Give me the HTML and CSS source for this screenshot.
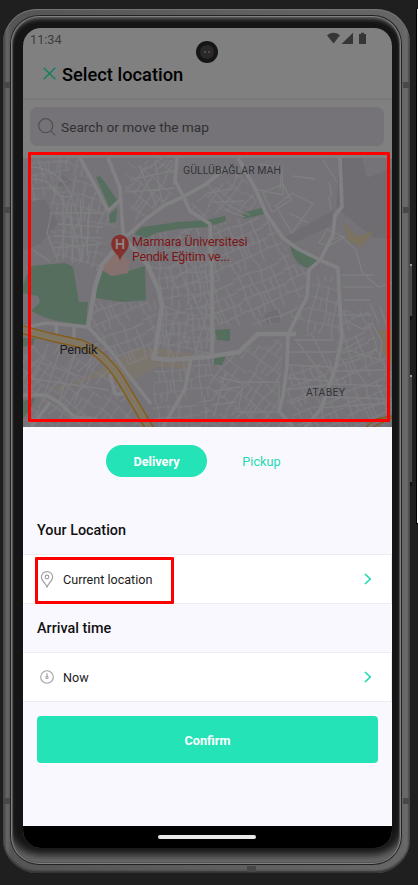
FILE: index.html
```html
<!DOCTYPE html>
<html lang="en">
<head>
<meta charset="utf-8">
<title>Select location</title>
<link rel="stylesheet" href="styles.css">
</head>
<body>
<div class="window-edge"></div>
<i class="side-key power"></i><i class="side-key volume"></i>
<div class="phone">
  <i class="antenna a1"></i><i class="antenna a2"></i><i class="antenna a3"></i><i class="antenna a4"></i><i class="antenna a5"></i><i class="antenna a6"></i><i class="antenna bottom"></i>
  <div class="bezel">
    <main class="screen">
      <div class="status">
        <span>11:34</span>
        <svg width="40" height="13" viewBox="0 0 40 13" fill="#363636"><path d="M0 3.2Q6.500-1.600 13 3.200L6.500 11.500Z"/><path d="M14.500 12 26 .8V12Z"/><path d="M32 2h2V.7h3V2h2v10h-7Z"/></svg>
      </div>
      <div class="camera"><i></i></div>
      <header class="header">
        <svg width="13" height="13" viewBox="0 0 13 13" fill="none" stroke="#14805f" stroke-width="1.500"><path d="M.7.700 12.300 12.300M12.300.700.700 12.300"/></svg>
        <h1>Select location</h1>
      </header>
      <div class="search-wrap">
        <div class="search">
          <svg width="18" height="18" viewBox="0 0 18 18" fill="none" stroke="#505054" stroke-width="1.200"><circle cx="7.700" cy="7.700" r="7"/><path d="m12.800 12.800 4.500 4.500"/></svg>
          <span>Search or move the map</span>
        </div>
      </div>
      <div class="map">
        <svg width="369" height="269" viewBox="23 158 369 269">
          <defs>
            <g id="blocks" fill="none" stroke="#7f7e81" stroke-width="1.200">
              <path d="M0 5H18L31 8H52M0 17H12L28 19H52M0 29H20L36 31H52M0 42H31L52 41M7 0V17L5 29V52M18 5V19L20 29V42L17 52M31 0V8L28 19V42L30 52M42 8V31L39 42V52M12 42V52M36 19V31M24 29V42M47 31V42M13 17V29"/>
            </g>
            <pattern id="p1" width="52" height="52" patternUnits="userSpaceOnUse" patternTransform="rotate(12)"><use href="#blocks"/></pattern>
            <pattern id="p2" width="52" height="52" patternUnits="userSpaceOnUse" patternTransform="rotate(-24) scale(.95)"><use href="#blocks"/></pattern>
            <pattern id="p3" width="52" height="52" patternUnits="userSpaceOnUse" patternTransform="rotate(35) scale(1)"><use href="#blocks"/></pattern>
            <pattern id="p4" width="52" height="52" patternUnits="userSpaceOnUse" patternTransform="rotate(-8) scale(.9)"><use href="#blocks"/></pattern>
          </defs>
          <path fill="#757378" d="M23 158h369v269H23z"/>
          <path fill="#6f6d72" d="M340 158h22l5 20 25-10v71l-20-2-36-30zM285 237l49-27-2 15-40 19zM23 200l23 0 12 24-18 20-17 6zM53 184l10-9 9 7-8 6zM264 313l14-3 5 12-16 2z"/>
          <path fill="#7b7260" d="m343 222 14 15 18-7-14 17-13-6zM379 330h13v35l-9-12z"/>
          <path fill="#7c756e" d="m52 389 40-14 42-27 27 1 33 5-5 15-33-2-28 16-30-6-43 14z"/>
          <path fill="url(#p1)" d="M56 159h23l29 52 8 15-17 45-24-9H58l-10-35zM167 300h48v58h-60zM306 276h35v65l-52-8z"/>
          <path fill="url(#p2)" d="m183 226 60-8 22-4 30 50 13 6-14 48-38 10-45-4-47-48zM94 302h64l-4 54-45 16-22-32zM338 310h30l10 40 14 18v59H285l4-60 47-9z"/>
          <path fill="url(#p3)" d="M128 160h46l2 33-40 31-13-36zM188 205l54-34 18 36-40 12-22 1zM23 342l62 5 27 25 36 55H23zM213 358l70-20-4 72 10 17h-85z"/>
          <path fill="url(#p4)" d="M131 232l45-2 43 46-6 78-50 4-4-70zM32 159h40l-5 26-35 18zM154 359h58l-4 68h-55z"/>
          <g fill="#566e5e">
            <path d="m96 177 4-1 4 5 13 19-7 9zM109 215l8-7-1 14-6 1zM134 234l8-7 36-5 29-2 18-4 1 5-19 6-29 2-22 4-10 5zM243 213l19-5 2 6-21 5zM290 246l28 14-10 8q-14-3-18-22z"/>
            <path d="m31 266 34-3 8 4 2 12 4 23 9 0-2 23-28-4-12-3-15-7 9-9-2-6-15-3v-8zM101 270l11 6 33-10 1 34-24 2-26-4V284z"/>
            <path d="m215 330 15-1v12l-13-1zM214 356h12l-4 9h-8zM23 338h12l-2 7-10 2zM23 401l12-3-5 12-7 8z"/>
          </g>
          <path fill="#86716f" d="m118 250 12 12-2 11-16 3-11-7z"/>
          <g fill="none" stroke="#7f7f81" stroke-width="1.300">
            <path d="M30 180q20-4 33 22t18 60M30 167q32 0 44 37t7 58M37 158q10 28 19 35t20 1M56 213h46M57 224l46 3M54 236l48 2M53 248l48-4M63 195v66M71 203l2 60M80 198l3 60M89 204l-2 52M33 250l17 12M52 211l-5 22 11 29M130 180l45-10M127 192l48-4M139 165l18 42M155 161l7 42M145 170l17-12M263 193l20-9 8 16-19 12zM276 206l16-13 21 11-21 29zM289 213l20 10M319 243l8-14 17 8-15 9zM331 240l10-4 15 14 6 22 16 15 14-4M370 303l9 21M260 164l22 4 1 27-28-6M207 193l25-4 7-20M213 202l31-1M218 208l27 9M208 184q14 22 42 31M342 275h31M343 287h29M344 300h26M342 315h30M347 321l15 8 10-6 10 19-2 18-33-10M340 352l24-14M343 360l34-10M335 371l50-1M330 384l53 2M325 397l66 2M318 408l72-5M294 340h40M289 352h47M288 365l45 2M286 378l43 3M286 390l39-5M289 404l33-13M296 340l34 45M311 333l24 47M243 382h36v30h-41zM219 377l23 6M214 391l26-4M212 405l25-3M226 371l-12 45M46 354l-19 30M63 342l-18 51M77 348l-18 54M92 358l-18 46M34 361l49 16M27 378l82 12"/>
            <path d="M281 174l-1 16M293 176l22 3M323 160l14 22M329 196l2 14M329 182l3 15M380 306l6 18"/>
          </g>
          <g fill="none" stroke="#818183" stroke-width="3.600" stroke-linejoin="round">
            <path d="m80 158 17 31 11 22 12-11M108 158l12 30 3 44 5 11M127 236l20-18 18-13 18-8 23-13 21-17" />
            <path stroke-width="4.600" d="m124 236-11 16-11 13-7 22-7 40M125 239l10 11 12 14 12 27 3 15-7 47-2 5 16 2 38-3 32-5 19-18h38"/>
            <path d="m177 158-2 23 8 15 7 15 20 13 2 60v69M238 158l17 30 11 25 17 25 15 11 22 11 18 8 1 22 3 47-6 29-15 43-24 28"/>
            <path d="m340 158 2 49-7 8-2 20-13 25-11 10-2 27-8 15-11 23-1 31-4 30-4 15 14 16M191 358l-6 31-22 38M23 328l23-5 42 4 23 24 16 22 24 31M56 322l1 18M23 395h23l14 8 14 14 23 2M50 402l-19 25M110 374l5 20h12M74 325v17"/>
          </g>
          <path fill="none" stroke="#855c18" stroke-width="9" d="m20 329 30 8 32 7q24 11 40 38l28 47"/>
          <path fill="none" stroke="#807664" stroke-width="6.200" d="m20 329 30 8 32 7q24 11 40 38l28 47"/>
          <path fill="none" stroke="#855c18" stroke-width="1.300" d="m366 427 10-8 16-3M373 427l19-9"/>
          <path fill="#84312e" d="M120 261c-1-7-8.800-9-8.800-17.500a8.800 8.800 0 0 1 17.600 0C128.800 252 121 254 120 261Z"/>
          <path fill="none" stroke="#8d8585" stroke-width="2" d="M116.800 239v10M123.200 239v10M117 244h6"/>
          <g class="map-text">
            <text x="183" y="174" textLength="98">GÜLLÜBAĞLAR MAH</text>
            <text x="306" y="396" textLength="39">ATABEY</text>
            <text class="town" x="59.500" y="354" textLength="38">Pendik</text>
            <text class="place" x="132" y="246" textLength="115.500">Marmara Üniversitesi</text>
            <text class="place" x="132" y="260.500" textLength="98">Pendik Eğitim ve...</text>
          </g>
        </svg>
      </div>
      <section class="sheet">
        <nav class="tabs"><button class="tab active">Delivery</button><button class="tab">Pickup</button></nav>
        <h2>Your Location</h2>
        <div class="row">
          <svg width="14" height="17" viewBox="0 0 14 17" fill="none" stroke="#a09fa4" stroke-width="1.200"><path d="M7 16C5.500 12.500 1.400 9.500 1.400 6a5.600 5.400 0 0 1 11.200 0C12.600 9.500 8.500 12.500 7 16Z"/><circle cx="7" cy="6" r="1.800"/></svg>
          <span>Current location</span>
          <svg class="chevron" width="8" height="12" viewBox="0 0 8 12"><path d="m1 1 5.200 5L1 11"/></svg>
        </div>
        <h2>Arrival time</h2>
        <div class="row">
          <svg width="14" height="14" viewBox="0 0 14 14" fill="none" stroke="#a09fa4" stroke-width="1.100"><circle cx="7" cy="7" r="6.300"/><path d="M7 3.200v3.200"/><circle cx="7" cy="7.400" r="1.100"/></svg>
          <span>Now</span>
          <svg class="chevron" width="8" height="12" viewBox="0 0 8 12"><path d="m1 1 5.200 5L1 11"/></svg>
        </div>
        <button class="confirm">Confirm</button>
      </section>
      <div class="navbar"><i></i></div>
      <div class="mark mark-map"></div>
      <div class="mark mark-location"></div>
    </main>
  </div>
</div>
</body>
</html>
```
FILE: styles.css
```css
* { box-sizing: border-box; }
body {
  margin: 0;
  width: 418px;
  height: 885px;
  padding: 9px 8px 12px 3px;
  overflow: hidden;
  position: relative;
  background: #1f1f1f;
  font-family: Roboto, sans-serif;
}
h1, h2 { margin: 0; font-weight: 500; }
svg { display: block; flex: none; }
button { border: 0; padding: 0; background: none; font: inherit; }
.window-edge {
  position: absolute;
  right: 0;
  top: 9px;
  width: 2px;
  height: 515px;
  background: #fff;
  border: solid #000;
  border-width: 0 0 1px 1px;
}
.side-key {
  position: absolute;
  left: 408px;
  width: 4px;
  background: #4b4b4b;
  border-top: 2px solid #999;
  border-bottom: 4px solid #111;
}
.power { top: 264px; height: 56px; }
.volume { top: 375px; height: 111px; }
.phone {
  position: relative;
  width: 407px;
  height: 864px;
  padding: 6px 8px 8px 7px;
  border-radius: 34px;
  background: linear-gradient(90deg, #444, #666 4px, #555 8px, #666 399px, #6a6a6a 404px, #444);
  box-shadow: inset 0 1px 1px #777, inset 0 -2px 2px #333;
}
.bezel {
  height: 850px;
  padding: 13px 10px 18px 13px;
  border-radius: 29px;
  background: #151515;
  box-shadow: inset 0 0 0 1px #222, inset 0 0 0 2px #808080, inset 0 0 1px 3px #555, inset 0 4px 4px #626262, inset 0 -13px 9px -3px #6c6c6c;
}
.antenna { position: absolute; width: 6px; height: 6px; left: 1px; background: #484848; }
.a1, .a2 { top: 73px; }
.a3, .a4 { top: 198px; }
.a5, .a6 { top: 789px; }
.a2, .a4, .a6 { left: 400px; }
.antenna.bottom { left: 244px; bottom: 1px; width: 9px; }
.screen {
  position: relative;
  width: 369px;
  height: 820px;
  display: flex;
  flex-direction: column;
  overflow: hidden;
  border-radius: 18px;
  background: #808080;
}
.status {
  height: 22px;
  padding: 4px 25px 0 7px;
  display: flex;
  justify-content: space-between;
  font-size: 12.7px;
  line-height: 15px;
  color: #3c3c3c;
}
.camera {
  position: absolute;
  left: 173px;
  top: 13px;
  width: 22px;
  height: 22px;
  border-radius: 50%;
  background: #151515;
  display: grid;
  place-items: center;
}
.camera i {
  width: 14px;
  height: 14px;
  border-radius: 50%;
  background: radial-gradient(circle at 5px 7px, #77704a 0, transparent 1.5px), radial-gradient(circle at 9px 7px, #885544 0, transparent 1.5px), #292929;
}
.header {
  height: 50px;
  padding: 0 20px 2px;
  display: flex;
  align-items: center;
  gap: 6px;
  border-bottom: 2px solid #797979;
}
.header h1 { padding-top: 2px; font-size: 18.3px; color: #000; }
.search-wrap { height: 58px; padding: 7px 8px 12px 7px; }
.search {
  height: 39px;
  padding: 0 8px;
  display: flex;
  align-items: center;
  gap: 5px;
  border-radius: 7px;
  background: #757377;
  color: #303032;
  font-size: 13.7px;
}
.map { height: 269px; }
.map-text { fill: #343438; font-size: 10.500px; }
.map-text .town { fill: #1b1b1d; font-size: 13px; }
.map-text .place { fill: #7c1515; font-size: 12.500px; }
.sheet { height: 399px; background: #faf8ff; }
.tabs {
  height: 79px;
  padding: 18px 0 0 83px;
  display: flex;
  align-items: flex-start;
  gap: 4px;
}
.tab { width: 101px; height: 32px; padding-top: 1px; font-size: 12.7px; color: #25d9af; }
.tab.active { border-radius: 16px; background: #24e3b7; color: #fff; font-weight: 700; }
.sheet h2 { height: 48px; padding: 0 14px; font-size: 14.4px; line-height: 50px; color: #111; }
.row {
  height: 50px;
  padding: 0 19px 0 17px;
  display: flex;
  align-items: center;
  gap: 9px;
  border: 1px solid #eeecf2;
  border-left: 0;
  background: #fff;
  font-size: 12.6px;
  color: #1c1c1c;
}
.chevron { margin-left: auto; fill: none; stroke: #25d9af; stroke-width: 1.700; }
.confirm {
  display: block;
  width: 341px;
  height: 47px;
  margin: 14px 0 0 14px;
  padding-top: 1px;
  border-radius: 4px;
  background: #24e3b7;
  color: #fff;
  font-size: 12.7px;
  font-weight: 700;
}
.navbar { height: 22px; padding-top: 9px; background: #000; }
.navbar i { display: block; width: 98px; height: 4px; margin-left: 135px; border-radius: 2px; background: #e8e8e8; }
.mark { position: absolute; border: 3px solid #f00; border-radius: 1px; }
.mark-map { left: 5px; top: 124px; width: 362px; height: 270px; }
.mark-location { left: 12px; top: 529px; width: 139px; height: 47px; }
```
